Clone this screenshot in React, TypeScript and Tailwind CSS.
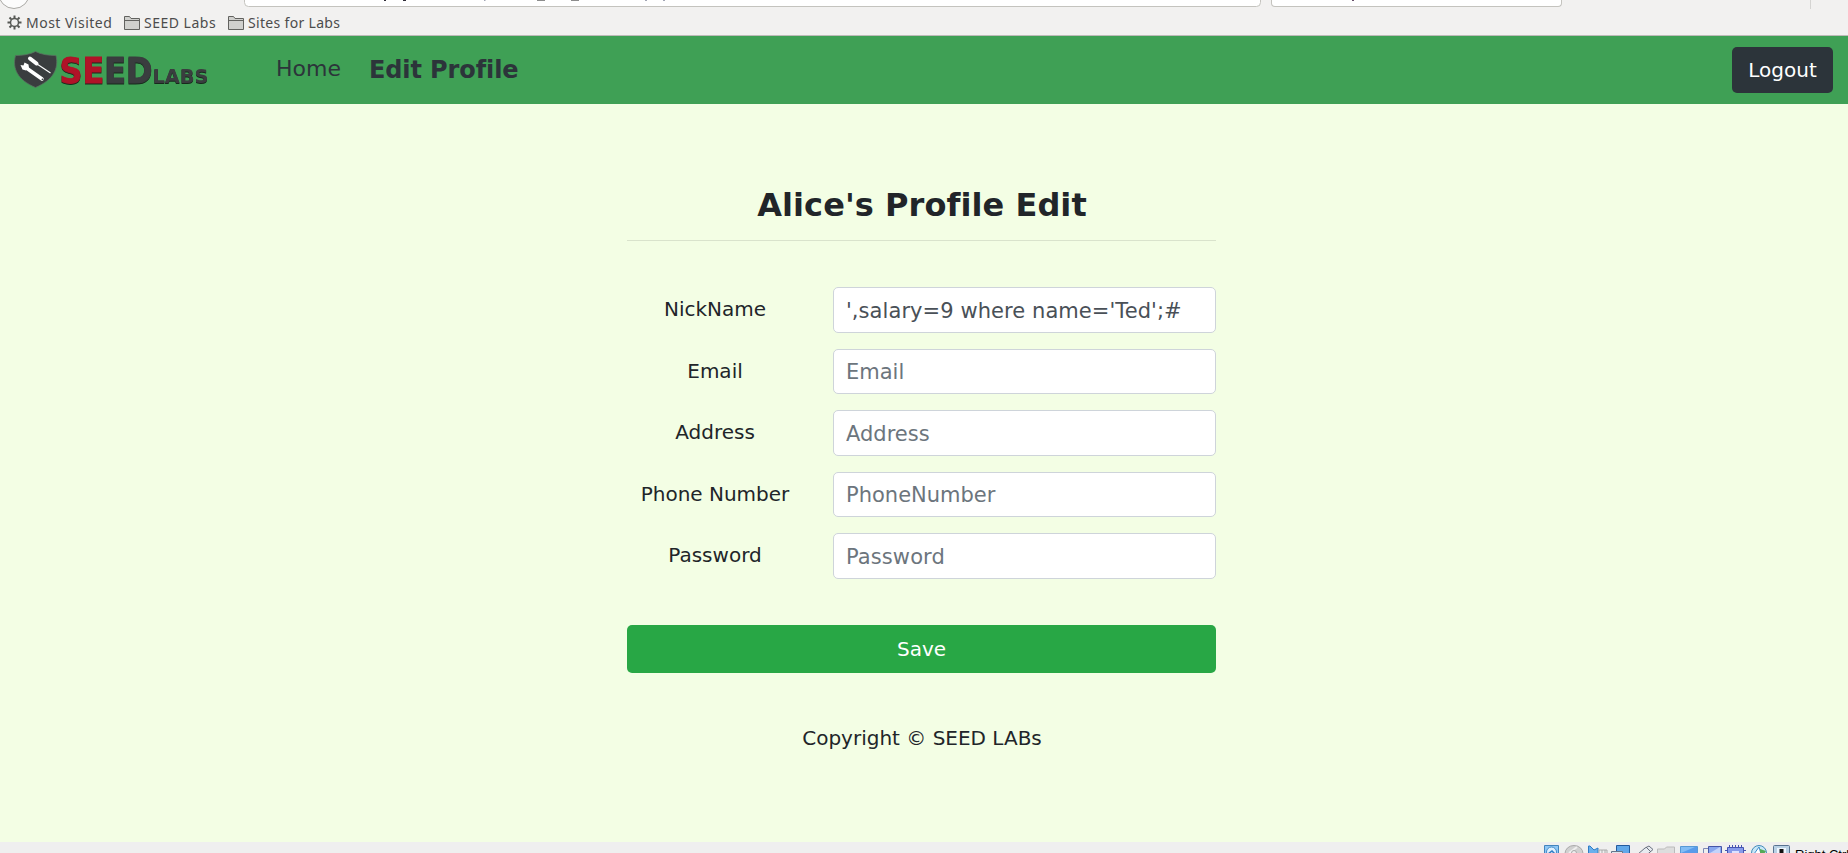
import React from "react";

const ROWS = [
  { label: "NickName", value: "',salary=9 where name='Ted';#", placeholder: "NickName", size: "h-[46px] mb-[16px]", input: "pt-[2px] tracking-[0.07px]" },
  { label: "Email", value: "", placeholder: "Email", size: "h-[45px] mb-[16px]", input: "" },
  { label: "Address", value: "", placeholder: "Address", size: "h-[46px] mb-[16px]", input: "pt-[2px]" },
  { label: "Phone Number", value: "", placeholder: "PhoneNumber", size: "h-[45px] mb-[16px]", input: "" },
  { label: "Password", value: "", placeholder: "Password", size: "h-[46px]", input: "pt-[2px] tracking-[0.1px]" },
];

function GearIcon() {
  return (
    <svg width="15" height="15" viewBox="0 0 15 15" fill="none" stroke="#555753" className="shrink-0">
      <circle cx="7.5" cy="7.5" r="4" strokeWidth="1.5" />
      <path
        d="M7.500 .5v2.500M7.500 12v2.500M.5 7.500H3M12 7.500h2.500M2.500 2.500l1.800 1.800M10.700 10.700l1.800 1.800M12.500 2.500l-1.800 1.800M4.300 10.700l-1.800 1.800"
        strokeWidth="2"
      />
    </svg>
  );
}

function FolderIcon() {
  return (
    <svg width="16" height="14" viewBox="0 0 16 14" fill="#d0d0cd" stroke="#62625f" className="shrink-0">
      <path d="M.5 13.500V.5h5l1.500 2h8.500v11z" />
      <path d="M.5 4.500h15" fill="none" />
    </svg>
  );
}

function Logo() {
  return (
    <svg
      width="197"
      height="40"
      viewBox="0 0 197 40"
      fill="none"
      className="shrink-0 overflow-visible"
      fontFamily="'DejaVu Sans', sans-serif"
      fontWeight="700"
    >
      <path
        d="M22.500 1.500C17 4.500 9 5.500 2.500 5.500C-1 19 5 30 22.500 37.500C40 30 46 19 43 5.500C36 5.500 28 4.500 22.500 1.500Z"
        fill="#3a3d3f"
        stroke="#58705f"
        strokeWidth=".8"
      />
      <path d="M17 8.500L23.500 13.500" stroke="#fff" strokeWidth="4" strokeLinecap="round" />
      <path d="M24 14L37.500 23" stroke="#fff" strokeWidth="1.200" />
      <path d="M12 17L29 29" stroke="#fff" strokeWidth="3.600" strokeLinecap="round" />
      <path d="M7.500 15L10.500 15.500L11.500 12.500L15.500 14.500L16 18L13 20.500L9.500 19.500Z" fill="#fff" />
      <circle cx="29.500" cy="29.300" r=".9" fill="#3a3d3f" />
      <g className="drop-shadow-[0.8px_1px_0_#17291c]">
        <text x="0" y="0" transform="translate(46.500 32.500) scale(1.300 1)" fontSize="36" textLength="71.500" lengthAdjust="spacingAndGlyphs" strokeWidth=".9">
          <tspan fill="#b01328" stroke="#b01328">SE</tspan>
          <tspan fill="#3a3d3f" stroke="#3a3d3f">ED</tspan>
        </text>
        <text x="139.500" y="32.500" fontSize="20" textLength="56" lengthAdjust="spacingAndGlyphs" fill="#3a3d3f">
          LABS
        </text>
      </g>
    </svg>
  );
}

function UrlBar() {
  return (
    <svg width="1017" height="7" className="ml-[214px] shrink-0">
      <rect x=".5" y="-10" width="1016" height="16.500" rx="4" fill="#fff" stroke="#c4c3be" />
      <path d="M140 .5h2M159 .5h3" stroke="#302c38" />
      <path d="M240 .5h1.500M401 .5h2M419 .5h2" stroke="#a3a6b5" />
      <path d="M293 .5h8M327 .5h8" stroke="#8d8d8d" />
    </svg>
  );
}

function StatusIcons() {
  return (
    <svg width="254" height="9" viewBox="0 0 254 9" fill="none" className="shrink-0">
      <path d="M1.500 .5h14V9H1.500z" fill="#8ec6f5" stroke="#4284bd" />
      <circle cx="8.500" cy="7" r="5" fill="#dff0ff" stroke="#458bc9" />
      <path d="M5 9l4-3 3 3" stroke="#2f7cc4" strokeWidth="1.500" />
      <ellipse cx="31" cy="8.500" rx="9" ry="8" fill="#d0d0d0" stroke="#aaa" />
      <path d="M26 8l8-6" stroke="#efefef" strokeWidth="2" />
      <circle cx="31" cy="8" r="2.500" fill="#eee" stroke="#aaa" />
      <path d="M45.500 1l1.500 0 4 4 4-2V9h-9.500z" fill="#6ab0ec" stroke="#2f7cc4" />
      <path d="M56 9V5h8v4M59 9V5m3 4V5" stroke="#aaa" />
      <path d="M73.500 .5h13V9h-13z" fill="#62a8ea" stroke="#245b9d" />
      <path d="M68.500 6.500h11v3h-11z" fill="#dce4ec" stroke="#65758a" />
      <path d="M95 9l7-6 4-2 4 3.500-7 6z" fill="#e7eaf0" stroke="#69717e" />
      <path d="M103 2l5 5" stroke="#69717e" />
      <path d="M114.500 9V4h7l2-2h8v7z" fill="#ddd" stroke="#bbb" />
      <path d="M137.500 1.500h17V9h-17z" fill="#82bdf5" stroke="#5799d5" />
      <path d="M138 8L152 2h2v7h-16z" fill="#589bea" />
      <path d="M160.500 3.500h6v6h-6z" fill="#eee" stroke="#7e89b5" />
      <path d="M165.500 1.500h13v8h-13z" fill="#8aa8ef" stroke="#4656a7" />
      <path d="M167 8l10-6v7h-10z" fill="#c3d3fa" />
      <path d="M184.500 2.500h16V9h-16z" fill="#879bea" stroke="#4553b1" />
      <path d="M186.500 0v3m3-3v3m3-3v3m3-3v3m3-3v3M182 5.500h3m15 0h3" stroke="#4553b1" />
      <path d="M189 6h7v3h-7z" fill="#dce2ff" />
      <circle cx="216" cy="8" r="7.500" fill="#c8e7f7" stroke="#438bb8" />
      <path d="M211 9l5-7 2 7" fill="#fff" stroke="#3d8bcb" />
      <path d="M217 4l6 2-2 3h-4z" fill="#54a957" />
      <rect x="230.500" y=".5" width="16" height="12" rx="1" fill="#b9d1e5" stroke="#587391" />
      <path d="M234 3h9v6h-9z" fill="#edf5ff" />
      <path d="M236.500 4h4v5h-4z" fill="#111" />
    </svg>
  );
}

export default function App() {
  return (
    <div className="flex h-[853px] w-full flex-col overflow-hidden bg-[#f3fee4] font-['DejaVu_Sans',sans-serif] text-[20px] text-[#212529]">
      <header className="h-[36px] shrink-0 overflow-hidden border-b border-[#bdbbb8] bg-[#f2f1f0]">
        <div className="flex h-[10px] items-start">
          <svg width="30" height="10" className="shrink-0">
            <circle cx="14" cy="-7" r="15.500" fill="#fcfcfc" stroke="#aaa9a5" />
          </svg>
          <UrlBar />
          <div className="ml-[10px] flex h-[7px] w-[291px] shrink-0 rounded-b-[4px] border border-t-0 border-[#c4c3be] bg-white pl-[80px]">
            <span className="h-px w-[2px] bg-[#66506a]" />
          </div>
          <span className="ml-[248px] h-[9px] w-px bg-[#d5d4d2]" />
        </div>
        <div className="flex h-[25px] items-center pl-[7px] font-['Noto_Sans',sans-serif] text-[14px] leading-[20px] tracking-[0.32px] text-[#4c4c4c]">
          <GearIcon />
          <span className="ml-[4px] w-[98px] whitespace-nowrap tracking-[0.48px]">Most Visited</span>
          <FolderIcon />
          <span className="ml-[4px] w-[84px] whitespace-nowrap tracking-[0.5px]">SEED Labs</span>
          <FolderIcon />
          <span className="ml-[4px] whitespace-nowrap">Sites for Labs</span>
        </div>
      </header>

      <nav className="flex h-[68px] shrink-0 items-center bg-[#3fa055] pl-[13px] pr-[15px] text-[#2c343a]">
        <Logo />
        <a className="ml-[66px] pb-[2px] text-[22px] leading-[30px]">Home</a>
        <a className="ml-[28px] text-[24px] leading-[30px] font-bold tracking-[-0.1px]">Edit Profile</a>
        <button className="ml-auto h-[46px] w-[101px] rounded-[5px] bg-[#2c343a] text-[20px] text-white">Logout</button>
      </nav>

      <main className="flex min-h-0 flex-1 flex-col items-center pr-[5px]">
        <div className="flex w-[589px] flex-col">
          <h1 className="mt-[81px] h-[56px] border-b border-[#d9e3cc] pl-[1px] text-center text-[32px] leading-[40px] font-bold tracking-[0.06px]">
            Alice's Profile Edit
          </h1>
          <form className="mt-[46px] flex flex-col">
            {ROWS.map((row) => (
              <div key={row.label} className={`flex ${row.size}`}>
                <label className="mr-[30px] w-[176px] pt-[7px] text-center leading-[30px]">{row.label}</label>
                <input
                  className={`h-full w-[383px] rounded-[5px] border border-[#ced4da] bg-white px-[12px] text-[21px] text-[#495057] placeholder:text-[#6c757d] ${row.input}`}
                  defaultValue={row.value}
                  placeholder={row.placeholder}
                />
              </div>
            ))}
            <button type="button" className="mt-[46px] h-[48px] rounded-[5px] bg-[#28a745] text-[20px] text-white">
              Save
            </button>
          </form>
          <p className="mt-[50px] pl-[1px] text-center leading-[30px]">Copyright © SEED LABs</p>
        </div>
      </main>

      <footer className="flex h-[11px] shrink-0 items-start overflow-hidden bg-[#efefef] pt-[3px] pl-[1543px] font-['Liberation_Sans',sans-serif] text-[13px] leading-[16px] text-black">
        <StatusIcons />
        <span className="mt-[2px] -ml-[2px] shrink-0 whitespace-nowrap">Right Ctrl</span>
      </footer>
    </div>
  );
}
